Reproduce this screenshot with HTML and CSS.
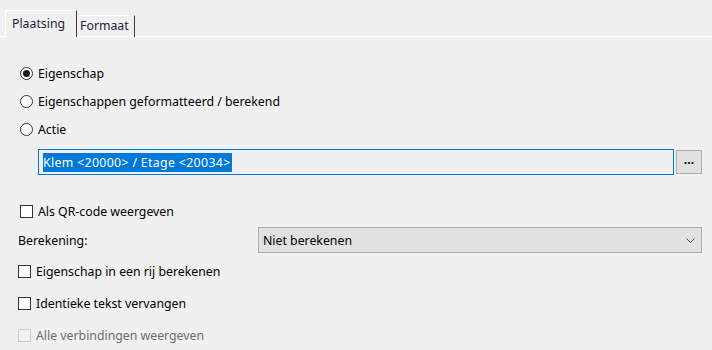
FILE: index.html
```html
<!DOCTYPE html>
<html lang="nl">
<head>
    <meta charset="UTF-8">
    <title>Plaatsing</title>
    <link rel="stylesheet" href="styles.css">
</head>
<body>

    <div class="tabs">
        <div class="tab active">Plaatsing</div>
        <div class="tab">Formaat</div>
    </div>

    <div class="panel">
        <div class="row radio-row">
            <span class="radio checked"></span>
            <span>Eigenschap</span>
        </div>
        <div class="row radio-row">
            <span class="radio"></span>
            <span>Eigenschappen geformatteerd / berekend</span>
        </div>
        <div class="row radio-row">
            <span class="radio"></span>
            <span>Actie</span>
        </div>

        <div class="field-row">
            <div class="textbox"><span class="selection">Klem &lt;20000&gt; / Etage &lt;20034&gt;</span></div>
            <div class="browse">...</div>
        </div>

        <div class="row check-row qr">
            <span class="check"></span>
            <span>Als QR-code weergeven</span>
        </div>

        <div class="calc-row">
            <span class="calc-label">Berekening:</span>
            <div class="select">
                <span>Niet berekenen</span>
                <svg class="chevron" width="9" height="5" viewBox="0 0 9 5"><path d="M0.5 0.5 L4.5 4.5 L8.5 0.5" fill="none" stroke="#555" stroke-width="1"/></svg>
            </div>
        </div>

        <div class="row check-row row-gap">
            <span class="check"></span>
            <span>Eigenschap in een rij berekenen</span>
        </div>
        <div class="row check-row row-gap">
            <span class="check"></span>
            <span>Identieke tekst vervangen</span>
        </div>
        <div class="row check-row row-gap disabled">
            <span class="check"></span>
            <span>Alle verbindingen weergeven</span>
        </div>
    </div>

</body>
</html>
```

FILE: styles.css
```css
body {
    margin: 0;
    background-color: #f0f0f0;
    font-family: "Noto Sans", "Liberation Sans", sans-serif;
    font-size: 12.3px;
    color: #000;
    width: 712px;
    height: 350px;
    overflow: hidden;
}
.tabs {
    display: flex;
    align-items: flex-end;
    height: 36px;
    padding-left: 5px;
    border-bottom: 1px solid #fff;
}
.tab {
    height: 21px;
    line-height: 20px;
    padding: 0 5px 0 3px;
    border-top: 1px solid #fff;
    border-right: 1px solid #3c3c3c;
    margin-bottom: -1px;
    color: #1e1e3c;
}
.tab.active {
    height: 26px;
    line-height: 26px;
    padding: 0 11px 0 6px;
    border-left: 1px solid #fff;
    background-color: #f0f0f0;
}
.panel {
    padding: 22px 0 0 20px;
}
.row {
    display: flex;
    align-items: center;
    height: 28px;
}
.radio {
    width: 11px;
    height: 11px;
    border: 1px solid #333;
    border-radius: 50%;
    background-color: #fff;
    margin-right: 5px;
    position: relative;
}
.radio.checked::after {
    content: '';
    position: absolute;
    left: 2px;
    top: 2px;
    width: 7px;
    height: 7px;
    border-radius: 50%;
    background-color: #1a1a1a;
}
.field-row {
    display: flex;
    align-items: center;
    margin: 6px 0 0 18px;
}
.textbox {
    width: 630px;
    height: 24px;
    border: 1px solid #0078d7;
    background-color: #f0f0f0;
    padding-left: 4px;
    display: flex;
    align-items: center;
}
.selection {
    background-color: #0078d7;
    color: #fff;
    line-height: 19px;
    padding-right: 1px;
    letter-spacing: 0.35px;
}
.browse {
    width: 24px;
    height: 22px;
    margin-left: 2px;
    border: 1px solid #adadad;
    background-color: #e1e1e1;
    text-align: center;
    line-height: 18px;
    font-weight: bold;
}
.check {
    width: 11px;
    height: 11px;
    border: 1px solid #333;
    background-color: #fff;
    margin-right: 5px;
}
.check-row {
    margin-left: -2px;
}
.qr {
    margin: 22px 0 0 0;
}
.calc-row {
    display: flex;
    align-items: center;
    height: 26px;
    margin: 2px 0 0 -2px;
}
.calc-label {
    width: 240px;
}
.select {
    width: 432px;
    height: 24px;
    border: 1px solid #adadad;
    background-color: #e1e1e1;
    display: flex;
    align-items: center;
    justify-content: space-between;
    padding: 0 6px 0 4px;
}
.row-gap {
    margin-top: 4px;
}
.disabled {
    color: #6d6d6d;
}
.disabled .check {
    border-color: #cccccc;
    background-color: #f0f0f0;
}
```
